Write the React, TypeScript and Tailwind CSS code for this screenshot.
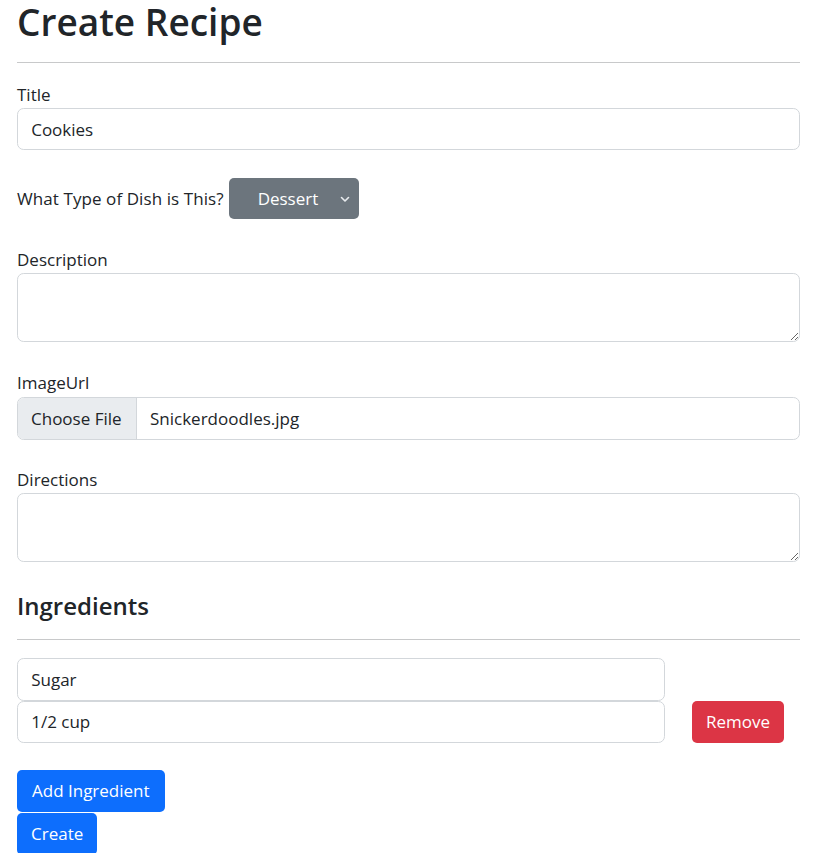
import React from 'react';

const inputBox =
  'block w-full bg-white border border-[#d3d7db] rounded-[6.6px] px-[13.2px] text-[17px] text-[#212529] outline-none';

const Label: React.FC<{ children: React.ReactNode; className?: string }> = ({ children, className }) => (
  <label className={`block leading-[26.4px] ${className ?? ''}`}>{children}</label>
);

const App: React.FC = () => {
  return (
    <div className="min-h-screen bg-white text-[#212529] font-['Open_Sans',sans-serif] text-[17px] leading-[1.5]">
      <div className="ml-[17px] w-[783px]">
        {/* Header */}
        <h1 className="text-[37px] font-semibold leading-[44px]">Create Recipe</h1>
        <hr className="mt-[17.6px] border-0 border-t-[1.5px] border-[#c8c9ca]" />

        {/* Title */}
        <Label className="mt-[19px]">Title</Label>
        <input className={`${inputBox} h-[42px]`} defaultValue="Cookies" />

        {/* Dish type */}
        <div className="mt-[28px] flex items-center h-[41px]">
          <span className="tracking-[0.08px]">What Type of Dish is This?</span>
          <button
            type="button"
            className="ml-[5px] h-[41px] w-[130px] rounded-[5px] bg-[#6c757d] text-white flex items-center pl-[29px] pr-[9px]"
          >
            <span className="flex-1 text-left">Dessert</span>
            <svg width="10" height="8" viewBox="0 0 10 8" fill="none">
              <path d="M1.5 2.5 5 6l3.5-3.5" stroke="#e9ecef" strokeWidth="1.6" strokeLinecap="round" strokeLinejoin="round" />
            </svg>
          </button>
        </div>

        {/* Description */}
        <Label className="mt-[28px]">Description</Label>
        <textarea className={`${inputBox} h-[69px] py-[6.6px]`} />

        {/* Image */}
        <Label className="mt-[28px]">ImageUrl</Label>
        <div className="flex h-[43px] border border-[#d3d7db] rounded-[6.6px] overflow-hidden">
          <span className="w-[119px] bg-[#e9ecef] border-r border-[#d3d7db] flex items-center pl-[13px]">
            Choose File
          </span>
          <span className="flex items-center pl-[13px]">Snickerdoodles.jpg</span>
        </div>

        {/* Directions */}
        <Label className="mt-[27px]">Directions</Label>
        <textarea className={`${inputBox} h-[69px] py-[6.6px]`} />

        {/* Ingredients */}
        <h4 className="mt-[29px] text-[24px] font-semibold leading-[30px]">Ingredients</h4>
        <hr className="mt-[17.6px] border-0 border-t-[1.5px] border-[#c8c9ca]" />

        <div className="mt-[18px] flex items-end">
          <div className="w-[648px]">
            <input className={`${inputBox} h-[43px]`} defaultValue="Sugar" />
            <input className={`${inputBox} h-[42px]`} defaultValue="1/2 cup" />
          </div>
          <button
            type="button"
            className="ml-[27px] h-[42px] w-[92px] rounded-[5px] bg-[#dc3545] text-white"
          >
            Remove
          </button>
        </div>

        <div className="mt-[27px] flex flex-col items-start">
          <button type="button" className="h-[42px] px-[15px] rounded-[5px] bg-[#0d6efd] text-white">
            Add Ingredient
          </button>
          <button type="button" className="mt-px h-[42px] px-[14px] rounded-[5px] bg-[#0d6efd] text-white">
            Create
          </button>
        </div>
      </div>
    </div>
  );
};

export default App;
